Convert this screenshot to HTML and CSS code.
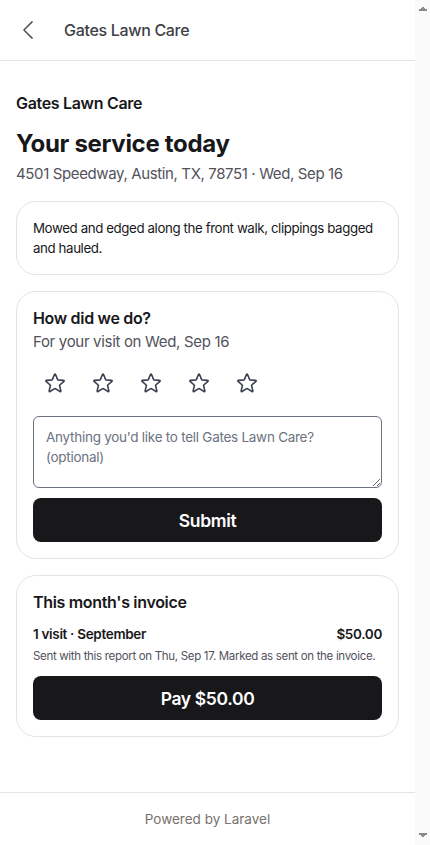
FILE: index.html
```html
<!DOCTYPE html>
<html lang="en">
<head>
<meta charset="utf-8">
<meta name="viewport" content="width=device-width, initial-scale=1">
<title>Gates Lawn Care</title>
<link rel="stylesheet" href="styles.css">
</head>
<body>
<header class="topbar">
  <a class="back" href="#" aria-label="Back">
    <svg width="26" height="26" viewBox="0 0 24 24" fill="none" stroke="currentColor" stroke-width="1.4" stroke-linecap="round" stroke-linejoin="round"><path d="M15.75 19.5 8.25 12l7.5-7.5"/></svg>
  </a>
  <span class="topbar-title">Gates Lawn Care</span>
</header>
<main class="main">
  <div class="intro">
    <div class="biz">Gates Lawn Care</div>
    <h1 class="headline">Your service today</h1>
    <p class="meta">4501 Speedway, Austin, TX, 78751 · Wed, Sep 16</p>
  </div>

  <section class="card">
    <p class="note">Mowed and edged along the front walk, clippings bagged and hauled.</p>
  </section>

  <section class="card">
    <h2 class="card-title">How did we do?</h2>
    <p class="card-sub">For your visit on Wed, Sep 16</p>
    <div class="stars">
      <button class="star" aria-label="1 star"><svg width="24" height="24" viewBox="0 0 24 24" fill="none" stroke="currentColor" stroke-width="1.6" stroke-linecap="round" stroke-linejoin="round"><path d="M11.48 3.499a.562.562 0 0 1 1.04 0l2.125 5.111a.563.563 0 0 0 .475.345l5.518.442c.499.04.701.663.321.988l-4.204 3.602a.563.563 0 0 0-.182.557l1.285 5.385a.562.562 0 0 1-.84.61l-4.725-2.885a.562.562 0 0 0-.586 0L6.982 20.54a.562.562 0 0 1-.84-.61l1.285-5.386a.562.562 0 0 0-.182-.557l-4.204-3.602a.562.562 0 0 1 .321-.988l5.518-.442a.563.563 0 0 0 .475-.345L11.48 3.5Z"/></svg></button>
      <button class="star" aria-label="2 stars"><svg width="24" height="24" viewBox="0 0 24 24" fill="none" stroke="currentColor" stroke-width="1.6" stroke-linecap="round" stroke-linejoin="round"><path d="M11.48 3.499a.562.562 0 0 1 1.04 0l2.125 5.111a.563.563 0 0 0 .475.345l5.518.442c.499.04.701.663.321.988l-4.204 3.602a.563.563 0 0 0-.182.557l1.285 5.385a.562.562 0 0 1-.84.61l-4.725-2.885a.562.562 0 0 0-.586 0L6.982 20.54a.562.562 0 0 1-.84-.61l1.285-5.386a.562.562 0 0 0-.182-.557l-4.204-3.602a.562.562 0 0 1 .321-.988l5.518-.442a.563.563 0 0 0 .475-.345L11.48 3.5Z"/></svg></button>
      <button class="star" aria-label="3 stars"><svg width="24" height="24" viewBox="0 0 24 24" fill="none" stroke="currentColor" stroke-width="1.6" stroke-linecap="round" stroke-linejoin="round"><path d="M11.48 3.499a.562.562 0 0 1 1.04 0l2.125 5.111a.563.563 0 0 0 .475.345l5.518.442c.499.04.701.663.321.988l-4.204 3.602a.563.563 0 0 0-.182.557l1.285 5.385a.562.562 0 0 1-.84.61l-4.725-2.885a.562.562 0 0 0-.586 0L6.982 20.54a.562.562 0 0 1-.84-.61l1.285-5.386a.562.562 0 0 0-.182-.557l-4.204-3.602a.562.562 0 0 1 .321-.988l5.518-.442a.563.563 0 0 0 .475-.345L11.48 3.5Z"/></svg></button>
      <button class="star" aria-label="4 stars"><svg width="24" height="24" viewBox="0 0 24 24" fill="none" stroke="currentColor" stroke-width="1.6" stroke-linecap="round" stroke-linejoin="round"><path d="M11.48 3.499a.562.562 0 0 1 1.04 0l2.125 5.111a.563.563 0 0 0 .475.345l5.518.442c.499.04.701.663.321.988l-4.204 3.602a.563.563 0 0 0-.182.557l1.285 5.385a.562.562 0 0 1-.84.61l-4.725-2.885a.562.562 0 0 0-.586 0L6.982 20.54a.562.562 0 0 1-.84-.61l1.285-5.386a.562.562 0 0 0-.182-.557l-4.204-3.602a.562.562 0 0 1 .321-.988l5.518-.442a.563.563 0 0 0 .475-.345L11.48 3.5Z"/></svg></button>
      <button class="star" aria-label="5 stars"><svg width="24" height="24" viewBox="0 0 24 24" fill="none" stroke="currentColor" stroke-width="1.6" stroke-linecap="round" stroke-linejoin="round"><path d="M11.48 3.499a.562.562 0 0 1 1.04 0l2.125 5.111a.563.563 0 0 0 .475.345l5.518.442c.499.04.701.663.321.988l-4.204 3.602a.563.563 0 0 0-.182.557l1.285 5.385a.562.562 0 0 1-.84.61l-4.725-2.885a.562.562 0 0 0-.586 0L6.982 20.54a.562.562 0 0 1-.84-.61l1.285-5.386a.562.562 0 0 0-.182-.557l-4.204-3.602a.562.562 0 0 1 .321-.988l5.518-.442a.563.563 0 0 0 .475-.345L11.48 3.5Z"/></svg></button>
    </div>
    <textarea class="comment" placeholder="Anything you'd like to tell Gates Lawn Care? (optional)"></textarea>
    <button class="btn">Submit</button>
  </section>

  <section class="card">
    <h2 class="card-title">This month's invoice</h2>
    <div class="inv-row">
      <span>1 visit · September</span>
      <span>$50.00</span>
    </div>
    <p class="inv-note">Sent with this report on Thu, Sep 17. Marked as sent on the invoice.</p>
    <button class="btn btn-pay">Pay $50.00</button>
  </section>
</main>
<footer class="footer">Powered by Laravel</footer>
</body>
</html>
```

FILE: styles.css
```css
* { box-sizing: border-box; }
html {
  margin: 0;
  padding: 0;
  background:
    linear-gradient(to top left, #8a8a8a 50%, transparent 50%) right 7px top 6px / 5px 5px no-repeat fixed,
    linear-gradient(to top right, #8a8a8a 50%, transparent 50%) right 2px top 6px / 5px 5px no-repeat fixed,
    linear-gradient(to bottom left, #8a8a8a 50%, transparent 50%) right 7px bottom 7px / 5px 5px no-repeat fixed,
    linear-gradient(to bottom right, #8a8a8a 50%, transparent 50%) right 2px bottom 7px / 5px 5px no-repeat fixed,
    linear-gradient(to left, #fafafa 15px, #ffffff 15px) fixed;
}
body {
  margin: 0 15px 0 0;
  padding: 0;
  font-family: Inter, "Noto Sans", sans-serif;
  color: #18181b;
  background: #fff;
  letter-spacing: -0.02em;
}
.topbar {
  height: 61px;
  display: flex;
  align-items: center;
  gap: 23px;
  padding: 0 0 0 15px;
  border-bottom: 1px solid #e5e5e5;
}
.back {
  display: flex;
  color: #52525b;
}
.topbar-title {
  font-size: 16px;
  font-weight: 500;
  color: #3f3f46;
}
.main {
  padding: 32px 16px 55px;
  display: flex;
  flex-direction: column;
  gap: 16px;
}
.biz {
  font-size: 16px;
  font-weight: 600;
  line-height: 20px;
}
.headline {
  margin: 13px 0 0;
  font-size: 24px;
  font-weight: 700;
  line-height: 36px;
}
.meta {
  margin: 1px 0 0;
  font-size: 15px;
  line-height: 22px;
  color: #52525b;
  letter-spacing: -0.025em;
}
.card {
  border: 1px solid #e4e4e7;
  border-radius: 20px;
  padding: 16px;
  display: flex;
  flex-direction: column;
}
.note {
  margin: 0;
  font-size: 13.3px;
  line-height: 20px;
  letter-spacing: -0.03em;
}
.card-title {
  margin: 0;
  font-size: 16px;
  font-weight: 600;
  line-height: 20px;
}
.card-sub {
  margin: 3px 0 0;
  font-size: 15px;
  line-height: 22px;
  color: #52525b;
}
.stars {
  display: flex;
  gap: 24px;
  margin: 18px 0 0 10px;
}
.star {
  border: 0;
  background: none;
  padding: 0;
  display: flex;
  color: #374151;
}
.comment {
  margin-top: 21px;
  height: 72px;
  width: 100%;
  border: 1px solid #6b7280;
  border-radius: 6px;
  padding: 10px 12px;
  font-family: inherit;
  font-size: 13.5px;
  line-height: 20px;
  letter-spacing: -0.02em;
  resize: vertical;
  display: block;
}
.comment::placeholder { color: #6b7280; }
.btn {
  margin-top: 10px;
  height: 44px;
  width: 100%;
  border: 0;
  border-radius: 8px;
  background: #18181b;
  color: #fff;
  font-family: inherit;
  font-size: 17.5px;
  font-weight: 600;
  letter-spacing: -0.02em;
}
.inv-row {
  margin-top: 12px;
  display: flex;
  justify-content: space-between;
  font-size: 13.5px;
  font-weight: 600;
  line-height: 20px;
}
.inv-note {
  margin: 4px 0 0;
  font-size: 11.5px;
  line-height: 16px;
  color: #52525b;
}
.btn-pay { margin-top: 12px; }
.footer {
  border-top: 1px solid #e7e5e4;
  padding: 16px 0 31px;
  line-height: 20px;
  text-align: center;
  font-size: 13.5px;
  color: #78716c;
  letter-spacing: 0;
}
```
